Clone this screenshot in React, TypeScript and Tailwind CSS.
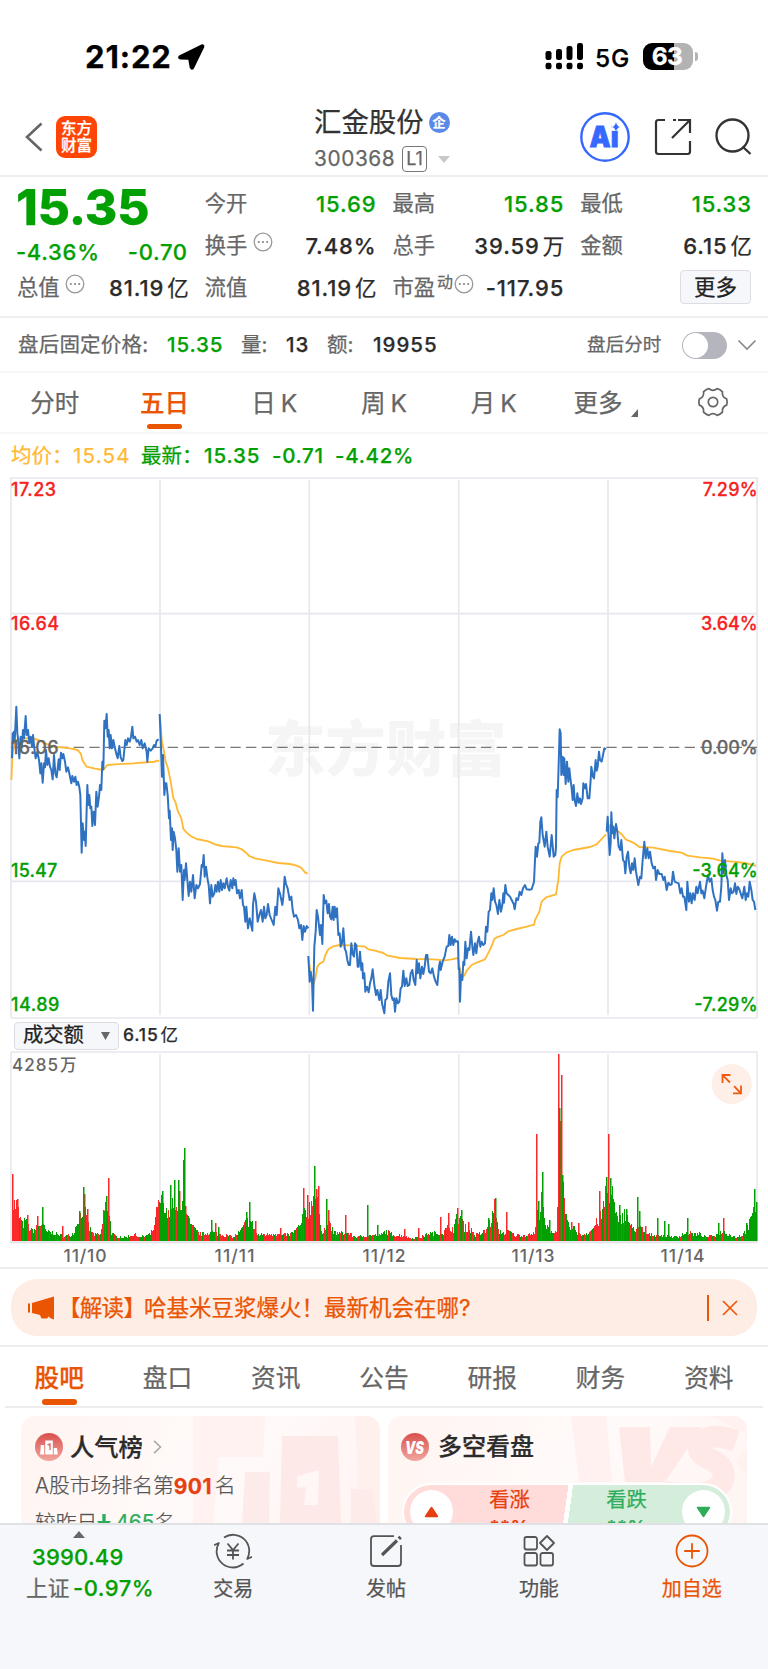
import type { ReactNode } from "react";

type Session = { x: number; y: number; price: string; average: string };

// chart units are a third of a pixel, each session is drawn from its own corner
const SESSIONS: Session[] = [
    {
        x: 0, y: 615,
        price: "36,235 38,160 40,190 42,155 44,185 49,80 52,160 54,175 58,235 62,170 66,195 69,150 72,175 77,108 80,165 84,150 88,190 92,170 96,200 99,165 103,205 107,235 112,215 117,240 121,280 124,250 128,308 132,250 135,262 138,210 142,255 146,235 150,260 154,270 158,298 162,225 166,280 170,292 176,238 179,270 183,218 187,235 190,222 195,245 199,275 204,262 209,285 214,310 217,288 222,305 226,290 230,315 234,305 238,322 241,345 245,518 248,430 252,480 254,455 257,498 262,315 265,375 268,345 271,385 274,380 277,438 281,395 285,435 289,335 293,380 297,350 300,315 304,330 307,245 310,268 313,122 316,145 320,102 323,170 326,150 329,205 332,165 336,205 340,180 345,205 350,225 353,235 358,198 362,232 367,243 370,240 376,180 380,195 384,175 389,185 393,170 397,140 400,175 405,170 410,185 414,180 419,195 424,180 428,205 434,190 440,215 442,245 446,205 452,212 458,205 462,195 466,200 470,182 476,178",
        average: "34,300 38,215 45,190 52,178 70,175 95,174 115,180 135,190 160,200 190,203 215,206 232,210 242,220 248,242 260,260 285,266 310,270 322,255 345,253 400,250 450,246 462,246 470,242 478,243",
    },
    {
        x: 0, y: 615,
        price: "479,102 482,175 486,290 489,225 493,345 496,310 499,310 503,345 507,415 509,392 513,480 516,445 518,510 521,455 525,475 529,510 532,575 536,505 540,575 544,555 548,660 552,570 554,600 558,550 562,600 566,648 570,605 574,635 579,585 584,655 589,615 594,625 600,612 605,555 608,560 611,525 614,590 618,560 623,600 626,615 630,670 634,615 638,650 643,640 646,615 650,635 654,605 658,635 662,600 666,630 670,610 674,625 680,595 684,620 688,632 692,600 697,625 700,595 704,615 707,600 711,640 716,630 720,655 725,630 729,675 732,680 736,725 739,680 744,745 749,715 757,752 759,675 763,640 768,665 773,725 778,705 783,690 788,725 792,680 796,715 800,705 804,672 809,705 815,720 821,735 826,680 830,705 835,625 841,645 847,675 850,650 854,590 858,612 863,625 869,660 874,650 878,690 882,710 888,705 894,720 898,745 903,735 907,780 911,738 915,755 920,738 925,745",
        average: "480,110 485,180 492,215 497,245 504,265 512,305 520,355 526,365 534,395 544,415 550,447 560,458 572,468 590,477 625,484 645,493 665,498 710,502 725,508 738,518 748,528 765,535 800,542 835,549 870,552 890,557 903,563 915,577 923,581",
    },
    {
        x: 870, y: 615,
        price: "55,828 59,905 62,875 66,905 69,992 73,800 77,755 80,690 84,710 90,765 93,735 97,792 101,645 105,670 109,662 113,700 117,672 120,710 124,718 128,680 131,720 134,680 138,712 141,685 145,765 149,760 152,800 156,790 160,745 164,805 168,815 172,840 176,855 180,855 184,790 188,822 192,830 195,790 199,795 203,860 206,860 210,815 214,870 217,850 219,895 223,880 226,935 231,920 236,937 240,910 244,895 248,868 253,915 258,945 262,930 268,960 272,930 276,970 283,1000 286,960 291,955 295,905 300,880 304,945 308,960 312,955 315,995 319,955 324,970 328,965 332,925 336,920 340,872 344,918 349,895 353,918 358,915 362,880 367,870 371,900 376,915 380,840 383,880 387,850 391,895 396,860 400,882 404,860 408,825 412,825 417,875 422,880 427,865 432,890 437,905 442,915 447,860 450,845 452,870 458,845 464,830 470,800 475,798 478,765 482,795 486,770 490,795 494,778 498,785 503,782",
        average: "56,840 62,880 70,915 76,895 82,860 90,850 100,845 106,825 115,808 130,799 150,795 180,796 225,800 235,808 255,812 280,819 290,826 330,834 380,837 430,838 465,841 485,838 503,834",
    },
    {
        x: 870, y: 615,
        price: "504,782 506,868 508,865 510,965 513,885 517,900 520,845 523,855 526,785 530,835 534,805 538,810 543,755 547,800 550,825 555,790 559,820 563,785 567,770 571,800 575,785 580,795 585,790 588,740 592,755 596,695 600,690 604,640 607,660 611,625 615,665 619,675 624,702 628,660 633,695 637,675 640,640 642,668 646,615 650,640 655,645 660,650 665,660 671,672 674,688 679,655 684,660 689,635 694,645 699,625 705,615 710,628 718,629 725,628 732,605 735,540 737,500 741,530 745,490 748,488 751,425 754,412 758,465 764,500 769,455 773,500 779,530 785,465 791,530 796,525 798,500 800,330 803,352 807,220 809,148 812,160 814,285 818,230 821,285 823,235 827,312 831,245 835,305 838,265 841,295 845,325 848,360 851,315 854,360 858,378 862,340 866,368 870,355 873,372 878,355 880,310 885,325 888,312 893,355 898,355 902,300 904,260 909,290 912,295 917,240 920,272 923,260 927,215 930,240 935,245 939,225 943,205 948,208",
        average: "504,835 510,870 516,893 524,885 530,872 545,855 560,848 585,838 597,815 606,795 613,777 620,772 640,765 655,754 680,747 710,740 732,734 736,718 748,695 755,665 768,652 798,643 805,600 809,550 815,530 830,517 850,510 900,501 920,493 933,479 948,463",
    },
    {
        x: 1500, y: 675,
        price: "320,395 323,350 326,410 329,465 332,430 334,337 337,400 340,380 343,415 348,372 352,395 356,440 361,450 364,420 369,480 373,485 376,520 380,470 384,455 388,500 392,520 396,490 400,510 404,475 408,515 415,555 420,530 424,535 428,480 433,425 437,475 442,445 446,475 450,455 455,490 460,505 465,500 468,540 473,510 478,522 485,522 490,540 494,530 500,570 505,548 510,555 515,553 519,515 524,545 530,548 536,550 541,580 545,565 549,590 553,590 559,630 562,545 567,605 571,580 575,610 579,580 584,600 589,560 593,580 600,545 604,580 608,572 613,595 618,560 624,525 629,545 634,535 638,570 642,590 646,600 651,632 655,605 660,605 664,560 667,460 671,520 675,480 679,525 683,540 687,600 692,565 696,580 701,575 705,550 709,582 713,560 717,565 722,580 727,595 733,560 737,600 741,580 745,590 749,545 754,570 758,600 762,605 766,630",
        average: "322,400 330,375 335,372 345,392 356,395 367,405 378,419 393,425 403,430 418,441 460,443 510,453 545,458 562,467 600,472 640,476 660,482 700,485 735,489 755,494 768,498",
    },
];

// [x, height, share of red bars]
const VOLUME: [number, number, number][] = [
    [12, 38, 0.8], [16, 37, 0.5], [18, 30, 0.5], [20, 22, 0.2], [22, 17, 0.5], [25, 20, 0.5], [28, 15, 0.5], [31, 11, 0.2], [38, 14, 0.4], [42, 20, 0.1],
    [45, 10, 0.3], [50, 9, 0.1], [58, 7, 0.4], [63, 5, 0.4], [70, 6, 0.2], [74, 10, 0.1], [77, 22, 0.2], [80, 30, 0.1], [83, 35, 0.5], [86, 23, 0.5],
    [89, 13, 0.5], [93, 7, 0.4], [100, 6, 0.4], [103, 25, 0.4], [106, 40, 0.3], [109, 30, 0.2], [111, 8, 0.2], [115, 5, 0.1], [125, 4, 0.3], [134, 7, 0.8],
    [140, 4, 0.4], [150, 7, 0.4], [154, 15, 0.7], [157, 30, 0.8], [159, 38, 0.3], [162, 40, 0.1], [165, 28, 0.1], [168, 26, 0.1], [171, 36, 0.2], [174, 48, 0.2],
    [177, 26, 0.2], [180, 25, 0.4], [184, 50, 0.2], [187, 25, 0.1], [190, 16, 0.1], [195, 11, 0.4], [200, 7, 0.3], [205, 8, 0.6], [210, 10, 0.3], [215, 8, 0.5],
    [225, 6, 0.5], [233, 4, 0.3], [240, 10, 0.2], [245, 18, 0.1], [249, 22, 0.1], [253, 16, 0.6], [257, 6, 0.5], [265, 7, 0.6], [275, 8, 0.6], [280, 6, 0.4],
    [290, 7, 0.2], [295, 11, 0.1], [300, 16, 0.3], [304, 30, 0.5], [308, 33, 0.7], [312, 42, 0.3], [316, 45, 0.5], [319, 22, 0.4], [322, 10, 0.2], [325, 14, 0.2],
    [329, 17, 0.2], [333, 9, 0.3], [340, 8, 0.4], [345, 9, 0.5], [350, 7, 0.5], [357, 4, 0.5], [365, 6, 0.2], [372, 6, 0.7], [380, 6, 0.3], [385, 10, 0.4],
    [395, 6, 0.7], [402, 6, 0.6], [410, 3, 0.3], [420, 4, 0.5], [428, 8, 0.3], [435, 8, 0.3], [443, 9, 0.7], [448, 15, 0.8], [453, 13, 0.6], [456, 22, 0.6],
    [460, 26, 0.3], [464, 14, 0.2], [468, 13, 0.2], [472, 10, 0.4], [475, 6, 0.4], [485, 10, 0.6], [490, 20, 0.5], [495, 32, 0.4], [498, 10, 0.1], [505, 8, 0.4],
    [508, 10, 0.4], [515, 6, 0.6], [525, 6, 0.9], [534, 8, 0.9], [537, 26, 0.5], [542, 38, 0.3], [545, 15, 0.2], [549, 12, 0.3], [554, 9, 0.6], [556, 10, 0.5],
    [558, 90, 0.5], [562, 60, 0.5], [565, 25, 0.1], [568, 15, 0.1], [575, 12, 0.2], [580, 6, 0.3], [585, 8, 0.6], [590, 10, 0.5], [595, 17, 0.7], [600, 24, 0.8],
    [604, 38, 0.7], [607, 55, 0.3], [611, 55, 0.1], [615, 28, 0.2], [618, 17, 0.2], [622, 28, 0.1], [627, 26, 0.1], [630, 14, 0.3], [637, 13, 0.1], [641, 13, 0.2],
    [645, 7, 0.4], [655, 6, 0.2], [670, 5, 0.3], [678, 4, 0.5], [682, 8, 0.2], [690, 8, 0.2], [700, 7, 0.3], [705, 4, 0.3], [715, 6, 0.2], [723, 10, 0.4],
    [728, 7, 0.3], [735, 4, 0.3], [742, 6, 0.4], [748, 15, 0.4], [754, 32, 0.2], [757, 38, 0],
];

const RED_SPIKES: [number, number][] = [
    [12, 67], [17, 42], [27, 26], [37, 25], [62, 15], [84, 47], [87, 32], [103, 31], [108, 63], [156, 34], [179, 50], [185, 35], [215, 18], [255, 20], [280, 13],
    [303, 53], [307, 46], [316, 52], [318, 55], [328, 31], [345, 26], [404, 12], [418, 13], [440, 24], [448, 28], [457, 33], [468, 19], [494, 42], [506, 29],
    [536, 107], [541, 49], [558, 187], [560, 120], [561, 166], [571, 19], [578, 18], [599, 50], [605, 55], [608, 107], [645, 15], [723, 23],
];

const GREEN_SPIKES: [number, number][] = [
    [42, 34], [79, 30], [83, 54], [106, 45], [162, 50], [170, 56], [174, 61], [178, 61], [183, 81], [184, 93], [211, 21], [218, 14], [246, 29], [249, 39],
    [313, 45], [314, 75], [326, 42], [367, 36], [377, 16], [461, 31], [488, 23], [495, 43], [538, 40], [542, 69], [549, 21], [559, 133], [562, 66], [606, 64],
    [610, 63], [619, 36], [626, 32], [637, 44], [639, 30], [657, 23], [664, 20], [668, 17], [687, 23], [718, 18], [746, 18], [752, 28], [754, 52], [756, 39],
];

function volumeBars() {
    let red = "";
    let green = "";
    let seed = 7;
    const random = () => {
        seed = (seed * 16807) % 2147483647;
        return seed / 2147483647;
    };
    const reds = new Map(RED_SPIKES);
    const greens = new Map(GREEN_SPIKES);
    let i = 0;
    for (let x = 12; x < 757; x++) {
        while (i < VOLUME.length - 2 && VOLUME[i + 1][0] <= x) i++;
        const [x0, h0, share] = VOLUME[i];
        const [x1, h1] = VOLUME[i + 1];
        const base = h0 + ((h1 - h0) * (x - x0)) / (x1 - x0);
        const height = Math.round(base * (0.65 + random() * 0.6));
        const isRed = random() < share + 0.05;
        if (reds.has(x)) red += `M${x} 191v-${reds.get(x)}h1.5v${reds.get(x)}z`;
        else if (greens.has(x)) green += `M${x} 191v-${greens.get(x)}h1.5v${greens.get(x)}z`;
        else if (isRed) red += `M${x} 191v-${height}h1v${height}z`;
        else green += `M${x} 191v-${height}h1v${height}z`;
    }
    return { red, green };
}

const BARS = volumeBars();

function Dots() {
    return (
        <svg className="w-[20px] h-[20px]" viewBox="0 0 20 20" fill="none">
            <circle cx="10" cy="10" r="8.8" stroke="#999" strokeWidth="1.3" />
            <g fill="#888">
                <circle cx="5.8" cy="10" r="1.1" />
                <circle cx="10" cy="10" r="1.1" />
                <circle cx="14.2" cy="10" r="1.1" />
            </g>
        </svg>
    );
}

function Stat({ label, value, unit, green, extra }: { label: string; value: string; unit?: string; green?: boolean; extra?: ReactNode }) {
    return (
        <div className="flex h-[42px] items-center justify-between whitespace-nowrap">
            <div className="flex items-center text-[21.3px] text-[#666]">{label}{extra}</div>
            <div className={green ? "-mr-[1px] text-[22px] font-medium tracking-[0.9px] text-[#03a003]" : "-mr-[1px] text-[22px] font-medium tracking-[0.9px] text-[#2b2b2b]"}>
                {value}{unit && <span className="ml-[3px] text-[21.5px] font-normal tracking-normal">{unit}</span>}
            </div>
        </div>
    );
}

function StatusBar() {
    return (
        <div className="flex h-[95px] items-start pt-[38px] pl-[85px] text-black">
            <div className="w-[92px] text-[31px] leading-[38px] font-bold tracking-[0.9px]">21:22</div>
            <svg className="mt-[5px] h-[28px] w-[28px]" viewBox="0 0 28 28">
                <path d="M24.8 2.2 2.5 13.2Q1 15 3 15.6L12 16 13.5 24.5Q14.6 27 16.3 25L26.5 3.8Q26.7 1.6 24.8 2.2Z" stroke="#000" strokeWidth="1.6" strokeLinejoin="round" />
            </svg>
            <svg className="mt-[5px] ml-[340px] h-[27px] w-[39px]" viewBox="0 0 39 27">
                <rect x="0.5" y="8" width="6" height="9" rx="2.2" />
                <rect x="11" y="6" width="6" height="11" rx="2.2" />
                <rect x="21.5" y="3" width="6" height="14" rx="2.2" />
                <rect x="32" y="0" width="6" height="17" rx="2.2" />
                <rect x="0.5" y="19.7" width="6" height="6.6" rx="2.2" />
                <rect x="11" y="19.7" width="6" height="6.6" rx="2.2" />
                <rect x="21.5" y="19.7" width="6" height="6.6" rx="2.2" />
                <rect x="32" y="19.7" width="6" height="6.6" rx="2.2" />
            </svg>
            <div className="ml-[11px] w-[48px] text-[24.5px] leading-[40px] font-medium tracking-[0.8px]">5G</div>
            <div className="mt-[5px] flex h-[27px] w-[50px] items-center justify-center rounded-[9px] bg-[linear-gradient(90deg,#000_31px,#b3b3b3_31px)] pr-[2px] text-[24.5px] leading-none font-bold tracking-[-0.5px] text-white">63</div>
            <div className="mt-[14px] ml-[2px] h-[9px] w-[3px] rounded-r-[3px] bg-[#b3b3b3]"></div>
        </div>
    );
}

function Header() {
    return (
        <header className="flex h-[82px] items-start border-b-2 border-[#efeff0]">
            <svg className="mt-[27px] ml-[24px] h-[30px] w-[20px]" viewBox="0 0 20 30" fill="none">
                <path d="M17.5 1.5 3 15l14.5 13.5" stroke="#666" strokeWidth="2.6" />
            </svg>
            <div className="mt-[21px] ml-[12px] flex h-[42px] w-[41px] flex-col items-center justify-center rounded-[9px] bg-[#ff4506] text-[15.5px] leading-[17.5px] font-medium text-white">
                <span>东方</span>
                <span>财富</span>
            </div>
            <div className="ml-[217px] w-[140px] pt-[9px]">
                <div className="flex h-[36px] items-center">
                    <span className="text-[27.4px] leading-[36px] text-[#333]">汇金股份</span>
                    <span className="ml-[5px] flex h-[21px] w-[21px] items-center justify-center rounded-full bg-[#5a89e8] text-[13px] leading-none font-bold text-white">企</span>
                </div>
                <div className="flex h-[36px] items-center pt-[2px] text-[#666]">
                    <span className="w-[88px] text-[20.8px] tracking-[0.6px]">300368</span>
                    <span className="flex h-[26px] w-[25px] items-center justify-center rounded-[4px] border-[1.5px] border-[#777] text-[18px] leading-none">L1</span>
                    <svg className="ml-[11px] h-[7px] w-[12px]" viewBox="0 0 12 7"><path d="M0 0h12L6 7z" fill="#c8c8c8" /></svg>
                </div>
            </div>
            <svg className="mt-[17px] ml-[126px] h-[50px] w-[50px]" viewBox="0 0 50 50">
                <circle cx="25" cy="25" r="23.7" fill="none" stroke="#3568ff" strokeWidth="2.4" />
                <text x="9.5" y="35" fontSize="28" fontWeight="900" fill="#3568ff" stroke="#3568ff" strokeWidth="0.8" textLength="29" lengthAdjust="spacingAndGlyphs">Ai</text>
                <path d="M32 10.5h9v8.3h-9z" fill="#fff" />
                <path d="M36 10q.8 4.2 4 5-3.2.8-4 5-.8-4.2-4-5 3.2-.8 4-5z" fill="#3568ff" />
            </svg>
            <svg className="mt-[23px] ml-[24px] h-[38px] w-[38px]" viewBox="0 0 38 38" fill="none" stroke="#333" strokeWidth="2.2">
                <path d="M11 2H4.500Q2 2 2 4.500V33.500Q2 36 4.500 36H33.500Q36 36 36 33.500V23M19 2H22M24 2H36V15M36 2 18 20" />
            </svg>
            <svg className="mt-[23px] ml-[22px] h-[38px] w-[38px]" viewBox="0 0 38 38" fill="none" stroke="#333" strokeWidth="2.3">
                <circle cx="18.5" cy="17.5" r="16" />
                <path d="m28.5 28.5 8 7.5" />
            </svg>
        </header>
    );
}

function Quote() {
    return (
        <section className="flex h-[141px] gap-[17px] border-b-2 border-[#f0f0f1] px-[17px] pt-[6px]">
            <div className="w-[171px]">
                <div className="-ml-px flex h-[49px] items-center text-[49.5px] leading-none font-extrabold tracking-[-0.2px] text-[#03a003]">15.35</div>
                <div className="-mt-px -ml-px flex h-[42px] items-center justify-between text-[22px] font-medium tracking-[0.7px] text-[#03a003]">
                    <span>-4.36%</span>
                    <span>-0.70</span>
                </div>
                <div className="-mt-[6px]">
                    <Stat label="总值" value="81.19" unit="亿" extra={<span className="mb-[9px] ml-[5px]"><Dots /></span>} />
                </div>
            </div>
            <div className="w-[171px]">
                <Stat label="今开" value="15.69" green />
                <Stat label="换手" value="7.48%" extra={<span className="mb-[9px] ml-[6px]"><Dots /></span>} />
                <Stat label="流值" value="81.19" unit="亿" />
            </div>
            <div className="w-[171px]">
                <Stat label="最高" value="15.85" green />
                <Stat label="总手" value="39.59" unit="万" />
                <Stat label="市盈" value="-117.95" extra={<><span className="mb-[12px] ml-[2px] text-[16px] leading-none">动</span><span className="mb-[9px] ml-[1px]"><Dots /></span></>} />
            </div>
            <div className="w-[171px]">
                <Stat label="最低" value="15.33" green />
                <Stat label="金额" value="6.15" unit="亿" />
                <div className="flex h-[39px] items-center justify-end">
                    <button className="h-[34px] w-[71px] rounded-[4px] border border-[#dcdde4] bg-[#f6f7fa] text-[21.5px] leading-[30px] text-[#222]">更多</button>
                </div>
            </div>
        </section>
    );
}

function AfterHours() {
    return (
        <section className="flex h-[55px] items-center border-b-2 border-[#f6f6f7] pt-px pl-[18px] text-[20.5px] whitespace-nowrap text-[#666]">
            <span className="w-[149px] tracking-[0.2px]">盘后固定价格:</span>
            <span className="w-[74px] font-medium tracking-[0.9px] text-[#03a003]">15.35</span>
            <span className="w-[45px]">量:</span>
            <span className="w-[41px] font-medium tracking-[0.9px] text-[#2b2b2b]">13</span>
            <span className="w-[46px]">额:</span>
            <span className="w-[214px] font-medium tracking-[1px] text-[#2b2b2b]">19955</span>
            <span className="w-[95px] text-[18.6px]">盘后分时</span>
            <span className="flex h-[27px] w-[45px] items-center rounded-full bg-[#b5b6bd] p-[1px]">
                <span className="h-[25px] w-[25px] rounded-full bg-white"></span>
            </span>
            <svg className="ml-[10px] h-[12px] w-[20px]" viewBox="0 0 20 12" fill="none">
                <path d="m1.5 1.5 8.5 8.5 8.5-8.5" stroke="#888" strokeWidth="1.6" />
            </svg>
        </section>
    );
}

const PERIODS = ["分时", "五日", "日 K", "周 K", "月 K", "更多"];

function PeriodTabs() {
    return (
        <nav className="grid h-[61px] grid-cols-7 border-b-2 border-[#f6f6f7] text-[24.5px] text-[#666]">
            {PERIODS.map((name) => (
                <div key={name} className={name === "五日" ? "flex flex-col items-center text-[#ea5504] font-medium" : "flex flex-col items-center"}>
                    <div className="flex h-[51px] items-center pt-[10px] leading-none whitespace-nowrap">
                        <span className="[word-spacing:-2px]">{name}</span>
                        {name === "更多" && <svg className="mt-[18px] -mr-[5px] ml-[9px] h-[8px] w-[7px]" viewBox="0 0 7 8"><path d="M7 0v8H0z" fill="#666" /></svg>}
                    </div>
                    {name === "五日" && <div className="h-[5px] w-[35px] rounded-full bg-[#ea5504]"></div>}
                </div>
            ))}
            <div className="flex justify-center pt-[14px]">
                <svg className="h-[30px] w-[30px]" viewBox="-15 -15 30 30" fill="none" stroke="#666" strokeWidth="1.7">
                    <path d="M13.6-3.1Q14.6 0 13.6 3.1 8.7 5 9.5 10.2 7.2 12.6 4.1 13.4 0 10-4.1 13.4-7.2 12.6-9.5 10.2-8.7 5-13.6 3.1-14.6 0-13.6-3.1-8.7-5-9.5-10.2-7.2-12.6-4.1-13.4 0-10 4.1-13.4 7.2-12.6 9.5-10.2 8.7-5 13.6-3.1Z" />
                    <circle r="4.7" />
                </svg>
            </div>
        </nav>
    );
}

function PriceChart() {
    return (
        <svg className="h-[546px] w-[768px] shrink-0" viewBox="0 0 2304 1638" fill="none">
            <text x="795" y="887" fontSize="182" fontWeight="900" fill="#f5f5f5" textLength="725">东方财富</text>
            <g stroke="#e6e7ee" strokeWidth="5">
                <path d="M33 1629V9H2271V1629" />
                <path d="M480 15V1620M928 15V1620M1376 15V1620M1824 15V1620M33 416H2271M33 1219H2271M33 1629H2271" />
            </g>
            <path d="M33 817H2271" stroke="#777" strokeWidth="4" strokeDasharray="31 16" />
            {SESSIONS.map((session, i) => (
                <g key={i} transform={`translate(${session.x} ${session.y})`} strokeLinejoin="round">
                    <polyline points={session.average} stroke="#ffb933" strokeWidth="5.5" />
                    <polyline points={session.price} stroke="#2f72c2" strokeWidth="6" />
                </g>
            ))}
            <g fontSize="54" fontWeight="500" fill="#f52323" stroke="#f52323" strokeWidth="0.8">
                <text x="33" y="62" textLength="135">17.23</text>
                <text x="33" y="464" textLength="144">16.64</text>
                <text x="2273" y="62" textAnchor="end" textLength="165">7.29%</text>
                <text x="2273" y="464" textAnchor="end" textLength="170">3.64%</text>
            </g>
            <g fontSize="54" fontWeight="500" fill="#666" stroke="#666" strokeWidth="0.8">
                <text x="33" y="836" textLength="143">16.06</text>
                <text x="2273" y="836" textAnchor="end" textLength="170">0.00%</text>
            </g>
            <g fontSize="54" fontWeight="500" fill="#03a003" stroke="#03a003" strokeWidth="0.8">
                <text x="33" y="1205" textLength="139">15.47</text>
                <text x="33" y="1607" textLength="145">14.89</text>
                <text x="2273" y="1205" textAnchor="end" textLength="196">-3.64%</text>
                <text x="2273" y="1607" textAnchor="end" textLength="190">-7.29%</text>
            </g>
        </svg>
    );
}

function VolumeChart() {
    return (
        <svg className="h-[217px] w-[768px] shrink-0" viewBox="0 0 768 217" fill="none">
            <path d="M11 193V2H757V193" stroke="#e6e7ee" strokeWidth="1.5" />
            <path d="M160 4V191M309.300 4V191M458.700 4V191M608 4V191" stroke="#e6e7ee" strokeWidth="1.5" />
            <path d="M11 192.300H757" stroke="#e2e2e8" strokeWidth="2" />
            <path d={BARS.red} fill="#fa2a2a" />
            <path d={BARS.green} fill="#03a003" />
            <circle cx="731.7" cy="34" r="20" fill="#feefe8" />
            <path d="M722.500 33V25H730.500M722.800 25.300 730 32.500M741 35.500V43.300H733M740.700 43 734 36.200" stroke="#ef5d12" strokeWidth="1.8" />
            <g fontSize="17.5" fontWeight="500" fill="#666">
                <text x="12" y="20.5" textLength="46" fontSize="17">4285</text>
                <text x="60" y="21" fontSize="16.5">万</text>
                <text x="63.5" y="212" textLength="43">11/10</text>
                <text x="214.5" y="212" textLength="40">11/11</text>
                <text x="362.5" y="212" textLength="43">11/12</text>
                <text x="511.5" y="212" textLength="43">11/13</text>
                <text x="660.5" y="212" textLength="44">11/14</text>
            </g>
        </svg>
    );
}

function Banner() {
    return (
        <section className="border-y-2 border-[#ededf0] px-[11px] pt-[10px] pb-[9px]">
            <div className="flex h-[57px] items-center rounded-[26px] bg-[#feede5] text-[#ea5504]">
                <svg className="ml-[16px] h-[24px] w-[28px]" viewBox="0 0 28 24" fill="#ea5504">
                    <path d="M1 7.500h2v9H1zM5 7 27 .5V23.500L23.500 22.300 21.500 20.500 20 22.500H14.500L13 19 5 17Z" />
                </svg>
                <div className="ml-[3px] w-[631px] text-[22.5px] whitespace-nowrap">
                    <span className="inline-block w-[86px] tracking-[-0.7px]">【解读】</span>哈基米豆浆爆火！最新机会在哪?
                </div>
                <div className="ml-[18px] h-[26px] w-[1.5px] bg-[#ea5504]"></div>
                <svg className="ml-[13px] h-[16px] w-[16px]" viewBox="0 0 16 16" fill="none">
                    <path d="m1 1 14 14M15 1 1 15" stroke="#ea5504" strokeWidth="1.6" />
                </svg>
            </div>
        </section>
    );
}

const TABS = ["股吧", "盘口", "资讯", "公告", "研报", "财务", "资料"];

function SectionTabs() {
    return (
        <nav className="mx-[5px] grid h-[61px] grid-cols-7 border-b-2 border-[#ededf0] text-[24.7px] text-[#666]">
            {TABS.map((name, i) => (
                <div key={name} className={i === 0 ? "flex flex-col items-center font-medium text-[#ea5504]" : "flex flex-col items-center"}>
                    <div className="flex h-[52px] items-center pt-[10px] leading-none">{name}</div>
                    {i === 0 && <div className="h-[6px] w-[35px] rounded-full bg-[#ea5504]"></div>}
                </div>
            ))}
        </nav>
    );
}

function RankCard() {
    return (
        <div className="relative h-[160px] w-[359px] overflow-hidden rounded-[14px] bg-[linear-gradient(120deg,#fff5f2,#fffafa_50%,#fff3f1)] pt-[12px] pl-[14px]">
            <svg className="absolute top-0 right-0 h-[109px] w-[187px]" viewBox="193 1415 187 109">
                <path d="M193 1415h72l-2 41h-44l-6 68h-20z" fill="#fff2f0" />
                <path d="M355 1415h25v109h-20z" fill="#fff0ee" />
                <path d="M282 1435h56l3 89h-61z" fill="#fde9e7" />
                <path d="M245 1471h25l-1 53h-27zM351 1488h22l4 36h-26z" fill="#fdebe9" />
                <path d="M297 1475 319 1469 318 1504H304L306 1486 297 1487z" fill="#fff7f5" />
            </svg>
            <div className="relative flex h-[38px] items-center text-[24.3px] leading-none font-medium text-[#2b2b2b]">
                <svg className="mr-[7px] h-[28px] w-[28px]" viewBox="0 0 28 28">
                    <defs>
                        <linearGradient id="badge" x1="0" y1="0" x2="0" y2="1"><stop stopColor="#d9504c" /><stop offset="1" stopColor="#f2a6a0" /></linearGradient>
                    </defs>
                    <circle cx="14" cy="14" r="14" fill="url(#badge)" />
                    <path d="M10.200 7.500h7.600v14h-7.600zM5.800 12h3.400v9.500H5.200zM18.800 15h3.200l.8 6.500h-4z" fill="#fff" />
                    <path d="m12.500 12 2.500-1v6" fill="none" stroke="#dd6a64" strokeWidth="1.4" />
                </svg>
                人气榜
                <svg className="ml-[10px] h-[14px] w-[9px]" viewBox="0 0 9 14" fill="none"><path d="m1 .8 6.500 6.200L1 13.200" stroke="#aaa" strokeWidth="1.6" /></svg>
            </div>
            <div className="relative mt-px flex h-[38px] items-center text-[20.8px] leading-none font-light text-[#555]">
                A股市场排名第<span className="text-[21px] font-bold tracking-[0.4px] text-[#e63f10]">901</span><span className="ml-[3px]">名</span>
            </div>
            <div className="relative -mt-px flex h-[38px] items-center text-[20.8px] leading-none font-light text-[#555]">
                较昨日
                <svg className="mr-[4px] h-[18px] w-[14px]" viewBox="0 0 14 18"><path d="M5.300 0h3.400v7H14L7 17 0 7h5.300z" fill="#2fad5b" /></svg>
                <span className="font-normal text-[#2fad5b]">465</span>名
            </div>
        </div>
    );
}

function VoteCard() {
    return (
        <div className="relative h-[160px] w-[359px] overflow-hidden rounded-[14px] bg-[linear-gradient(120deg,#fff5f2,#fffafa_50%,#fff4f2)] pt-[12px] pl-[13px]">
            <svg className="absolute top-0 right-0 h-[109px] w-[187px]" viewBox="0 0 187 109">
                <path d="M11 0H46L52 66H19zM60 0H187V60L176 45 187 32V18L150 0z" fill="#fff1ef" />
                <path d="M59 11h31l1 40 19-40h32L105 66H65z" fill="#fee9e7" />
                <path d="M176 25Q146 14 139 31C137 45 169 42 163 64Q155 84 105 76" fill="none" stroke="#fee9e7" strokeWidth="22" />
            </svg>
            <div className="relative flex h-[38px] items-center text-[24px] leading-none font-medium text-[#2b2b2b]">
                <svg className="mr-[9px] h-[28px] w-[28px]" viewBox="0 0 28 28">
                    <circle cx="14" cy="14" r="14" fill="url(#badge)" />
                    <text x="4" y="20.5" fontSize="17" fontWeight="900" fontStyle="italic" fill="#fff" textLength="19" lengthAdjust="spacingAndGlyphs">VS</text>
                </svg>
                多空看盘
            </div>
            <div className="relative mt-[17px] ml-px flex h-[58px] w-[330px] overflow-hidden rounded-full border-2 border-white bg-[linear-gradient(98deg,#ffdcd9_49.3%,#fff_49.3%,#fff_50.7%,#d5eedb_50.7%)] pt-[5px] pl-[6px]">
                <div className="flex h-[43px] w-[43px] items-center justify-center rounded-full bg-white">
                    <svg className="h-[12px] w-[15px]" viewBox="0 0 15 12"><path d="M7.500 1.500 13.500 10.500H1.500z" fill="#e63f10" stroke="#e63f10" strokeWidth="1.5" strokeLinejoin="round" /></svg>
                </div>
                <div className="-mt-[1px] ml-[36px] w-[41px] text-center text-[20.3px] leading-[22px] text-[#e63f10]">看涨<div className="text-[18px] leading-[31px] font-bold tracking-[0.6px]">**%</div></div>
                <div className="-mt-[1px] ml-[76px] w-[41px] text-center text-[20.3px] leading-[22px] text-[#2fad5b]">看跌<div className="text-[18px] leading-[31px] font-bold tracking-[0.6px]">**%</div></div>
                <div className="ml-[35px] flex h-[43px] w-[43px] items-center justify-center rounded-full bg-white">
                    <svg className="h-[12px] w-[15px]" viewBox="0 0 15 12"><path d="M7.500 10.500 13.500 1.500H1.500z" fill="#2fad5b" stroke="#2fad5b" strokeWidth="1.5" strokeLinejoin="round" /></svg>
                </div>
            </div>
        </div>
    );
}

function NavItem({ label, active, children }: { label: string; active?: boolean; children: ReactNode }) {
    return (
        <div className={active ? "flex w-[152.8px] flex-col items-center pt-[7px] text-[#ea5504]" : "flex w-[152.8px] flex-col items-center pt-[7px] text-[#555]"}>
            <svg className="h-[38px] w-[38px]" viewBox="-19 -19 38 38" fill="none" stroke="currentColor" strokeWidth="1.8">{children}</svg>
            <span className="mt-[5px] text-[20px] leading-[28px]">{label}</span>
        </div>
    );
}

function BottomBar() {
    return (
        <footer className="flex h-[146px] border-t-2 border-[#e0e1e4] bg-[#f6f7fa]">
            <div className="w-[157px] pt-[6px] pl-[26px] whitespace-nowrap">
                <svg className="ml-[47px] h-[7px] w-[12px]" viewBox="0 0 12 7"><path d="M0 7h12L6 0z" fill="#666" /></svg>
                <div className="mt-[4px] pl-[6px] text-[22px] leading-[31px] font-medium tracking-[0.2px] text-[#03a003]">3990.49</div>
                <div className="flex text-[22px] leading-[30px] font-medium tracking-[0.5px] text-[#03a003]">
                    <span className="w-[47px] text-[21.7px] font-normal tracking-normal text-[#666]">上证</span>-0.97%
                </div>
            </div>
            <NavItem label="交易">
                <path d="M-9-13.500A16.200 16.200 0 0 1 14.300 7.600M10.500 12.500A16.200 16.200 0 0 1-14.300-7.600M-19-5.800-13.500-8.200M19 5.800 13.500 8.200" />
                <path d="M-5.500-7.500 0-1 5.500-7.500M0-1V8.500M-6-.5H6M-6 4H6" />
            </NavItem>
            <NavItem label="发帖">
                <path d="M8-14.800H-12Q-15-14.800-15-11.800V12Q-15 15-12 15H12Q15 15 15 12V-6" />
                <path d="M-4 4 11-10.500" strokeWidth="3.2" />
                <path d="m12.800-12.300 1.800-1.700" strokeWidth="3.6" />
            </NavItem>
            <NavItem label="功能">
                <rect x="-14.5" y="-14" width="12.5" height="12.5" rx="2" />
                <rect x="-14.5" y="2" width="12.5" height="12.5" rx="2" />
                <rect x="1.5" y="2" width="12.5" height="12.5" rx="2" />
                <path d="M8-15 15-8 8-1 1-8Z" strokeLinejoin="round" />
            </NavItem>
            <NavItem label="加自选" active>
                <circle r="15.5" />
                <path d="M-7.800 0H7.800M0-7.800V7.800" />
            </NavItem>
        </footer>
    );
}

export default function App() {
    return (
        <div className="flex h-[1669px] w-[768px] flex-col overflow-hidden bg-white font-['Inter','Noto_Sans_CJK_SC',sans-serif] [-webkit-text-stroke-width:0.25px] *:shrink-0">
            <StatusBar />
            <Header />
            <Quote />
            <AfterHours />
            <PeriodTabs />
            <div className="flex h-[41px] items-center pt-[3px] pl-[11px] text-[20.5px] whitespace-nowrap text-[#03a003]">
                <span className="w-[62px] text-[#ffb933]">均价：</span>
                <span className="w-[68px] tracking-[1.2px] text-[#ffb933]">15.54</span>
                <span className="w-[63px]">最新：</span>
                <span className="w-[68px] font-medium tracking-[0.9px]">15.35</span>
                <span className="w-[63px] font-medium tracking-[0.7px]">-0.71</span>
                <span className="font-medium tracking-[0.7px]">-4.42%</span>
            </div>
            <PriceChart />
            <div className="flex h-[29px] items-center pl-[14px] whitespace-nowrap">
                <div className="flex h-[28px] w-[105px] items-center rounded-[4px] border border-[#dcdde4] bg-[#f6f7fa] pl-[8px] text-[20.3px] leading-none text-[#222]">
                    成交额
                    <svg className="ml-[17px] h-[8px] w-[9px]" viewBox="0 0 9 8"><path d="M0 0h9L4.500 8z" fill="#666" /></svg>
                </div>
                <span className="ml-[4px] text-[17.5px] font-medium tracking-[0.8px] text-[#2b2b2b]">6.15<span className="ml-[2px] font-normal">亿</span></span>
            </div>
            <VolumeChart />
            <Banner />
            <SectionTabs />
            <div className="flex h-[115px] gap-[8px] overflow-hidden pt-[8px] pl-[21px]">
                <RankCard />
                <VoteCard />
            </div>
            <BottomBar />
        </div>
    );
}
